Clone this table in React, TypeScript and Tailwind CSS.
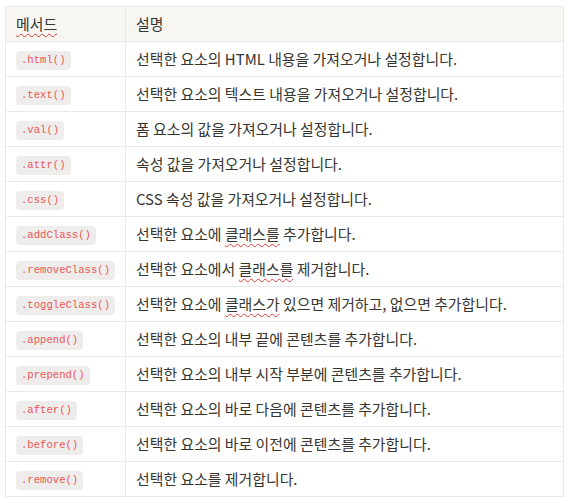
import React from "react";

type Row = { method: string; desc: React.ReactNode };

const Squiggle = ({ children }: { children: React.ReactNode }) => (
  <span className="underline decoration-wavy decoration-[#e03e3e] decoration-1 underline-offset-[3px]">
    {children}
  </span>
);

const rows: Row[] = [
  { method: ".html()", desc: "선택한 요소의 HTML 내용을 가져오거나 설정합니다." },
  { method: ".text()", desc: "선택한 요소의 텍스트 내용을 가져오거나 설정합니다." },
  { method: ".val()", desc: "폼 요소의 값을 가져오거나 설정합니다." },
  { method: ".attr()", desc: "속성 값을 가져오거나 설정합니다." },
  { method: ".css()", desc: "CSS 속성 값을 가져오거나 설정합니다." },
  {
    method: ".addClass()",
    desc: (
      <>
        선택한 요소에 <Squiggle>클래스를</Squiggle> 추가합니다.
      </>
    ),
  },
  {
    method: ".removeClass()",
    desc: (
      <>
        선택한 요소에서 <Squiggle>클래스를</Squiggle> 제거합니다.
      </>
    ),
  },
  {
    method: ".toggleClass()",
    desc: (
      <>
        선택한 요소에 <Squiggle>클래스가</Squiggle> 있으면 제거하고, 없으면 추가합니다.
      </>
    ),
  },
  { method: ".append()", desc: "선택한 요소의 내부 끝에 콘텐츠를 추가합니다." },
  { method: ".prepend()", desc: "선택한 요소의 내부 시작 부분에 콘텐츠를 추가합니다." },
  { method: ".after()", desc: "선택한 요소의 바로 다음에 콘텐츠를 추가합니다." },
  { method: ".before()", desc: "선택한 요소의 바로 이전에 콘텐츠를 추가합니다." },
  { method: ".remove()", desc: "선택한 요소를 제거합니다." },
];

function App() {
  return (
    <div
      className="bg-white w-[573px] h-[503px] pl-[5px] pt-[6px] text-[#37352f]"
      style={{ fontFamily: '"Noto Sans CJK KR", "Noto Sans", sans-serif' }}
    >
      <table className="border-collapse text-[14.9px] w-[559px] table-fixed">
        <colgroup>
          <col className="w-[120px]" />
          <col />
        </colgroup>
        <thead>
          <tr className="bg-[#f7f6f3] h-[35px]">
            <th className="border border-[#e9e9e7] px-[10px] text-left font-normal">
              <Squiggle>메서드</Squiggle>
            </th>
            <th className="border border-[#e9e9e7] px-[10px] text-left font-normal">설명</th>
          </tr>
        </thead>
        <tbody>
          {rows.map((r) => (
            <tr key={r.method} className="h-[35px]">
              <td className="border border-[#e9e9e7] px-[10px]">
                <code
                  className="inline-block rounded-[4px] bg-[#eeedeb] px-[5px] leading-[19px] text-[10.6px] text-[#eb5757] align-middle"
                  style={{ fontFamily: '"Liberation Mono", monospace' }}
                >
                  {r.method}
                </code>
              </td>
              <td className="border border-[#e9e9e7] px-[10px] whitespace-nowrap leading-[20px]">
                {r.desc}
              </td>
            </tr>
          ))}
        </tbody>
      </table>
    </div>
  );
}

export default App;
